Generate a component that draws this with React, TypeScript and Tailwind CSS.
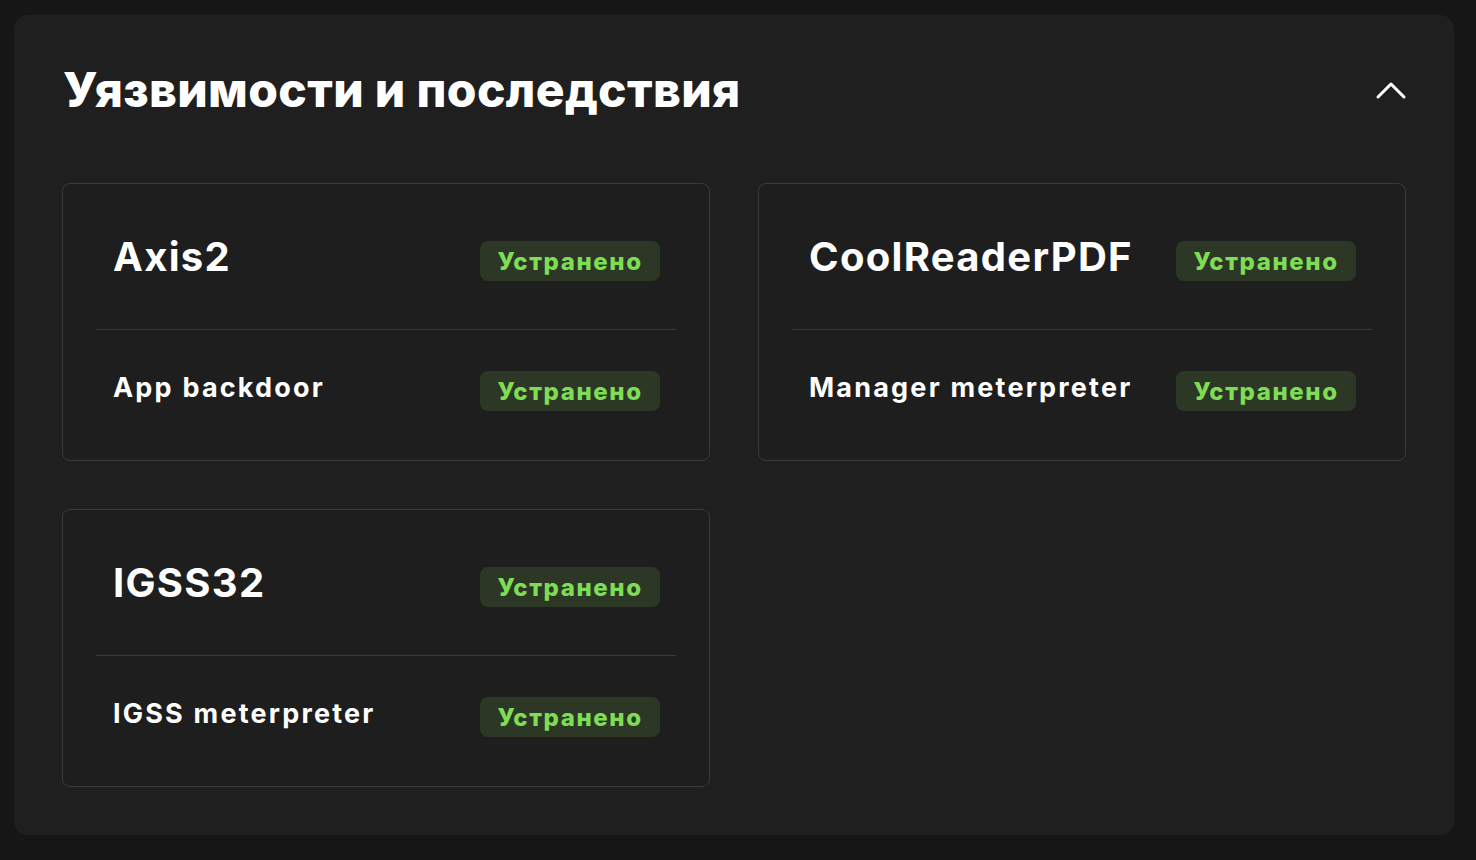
import React from "react";

const font = { fontFamily: "Inter, 'Noto Sans', sans-serif" };

function Badge() {
  return (
    <div className="flex h-[40px] w-[180px] shrink-0 items-center justify-center rounded-[8px] bg-[#2c3825] pt-[2px] text-[24px] font-extrabold tracking-[1.6px] text-[#7fdc55]">
      Устранено
    </div>
  );
}

function Card({ name, item }: { name: string; item: string }) {
  return (
    <div className="rounded-[8px] border border-[#3a3a3a] bg-[#1e1e1e] px-[33px] pt-[57px] pb-[49px]">
      <div className="flex h-[40px] items-center justify-between pl-[17px] pr-[16px]">
        <span className="-mt-[8px] text-[40px] font-bold leading-[40px] tracking-[1.3px] text-white">{name}</span>
        <Badge />
      </div>
      <div className="mt-[48px] h-px bg-[#3a3a3a]" />
      <div className="mt-[41px] flex h-[40px] items-center justify-between pl-[17px] pr-[16px]">
        <span className="-mt-[6px] text-[27px] font-bold tracking-[2.2px] text-white">{item}</span>
        <Badge />
      </div>
    </div>
  );
}

export default function App() {
  return (
    <div className="min-h-[860px] w-full bg-[#161616] pl-[14px] pr-[22px] pt-[15px] pb-[25px]" style={font}>
      <div className="rounded-[14px] bg-[#1f1f1f] px-[48px] pt-[48px] pb-[48px]">
        <div className="mb-[66px] flex h-[54px] items-center justify-between">
          <h1 className="ml-[1px] text-[48px] font-extrabold leading-[54px] tracking-[0.35px] text-white">
            Уязвимости и последствия
          </h1>
          <svg width="32" height="32" viewBox="0 0 32 32" className="mr-[-1px]" fill="none">
            <polyline points="3,23 16,10 29,23" stroke="white" strokeWidth="3" strokeLinecap="round" strokeLinejoin="round" />
          </svg>
        </div>
        <div className="grid grid-cols-2 gap-[48px]">
          <Card name="Axis2" item="App backdoor" />
          <Card name="CoolReaderPDF" item="Manager meterpreter" />
          <Card name="IGSS32" item="IGSS meterpreter" />
        </div>
      </div>
    </div>
  );
}
